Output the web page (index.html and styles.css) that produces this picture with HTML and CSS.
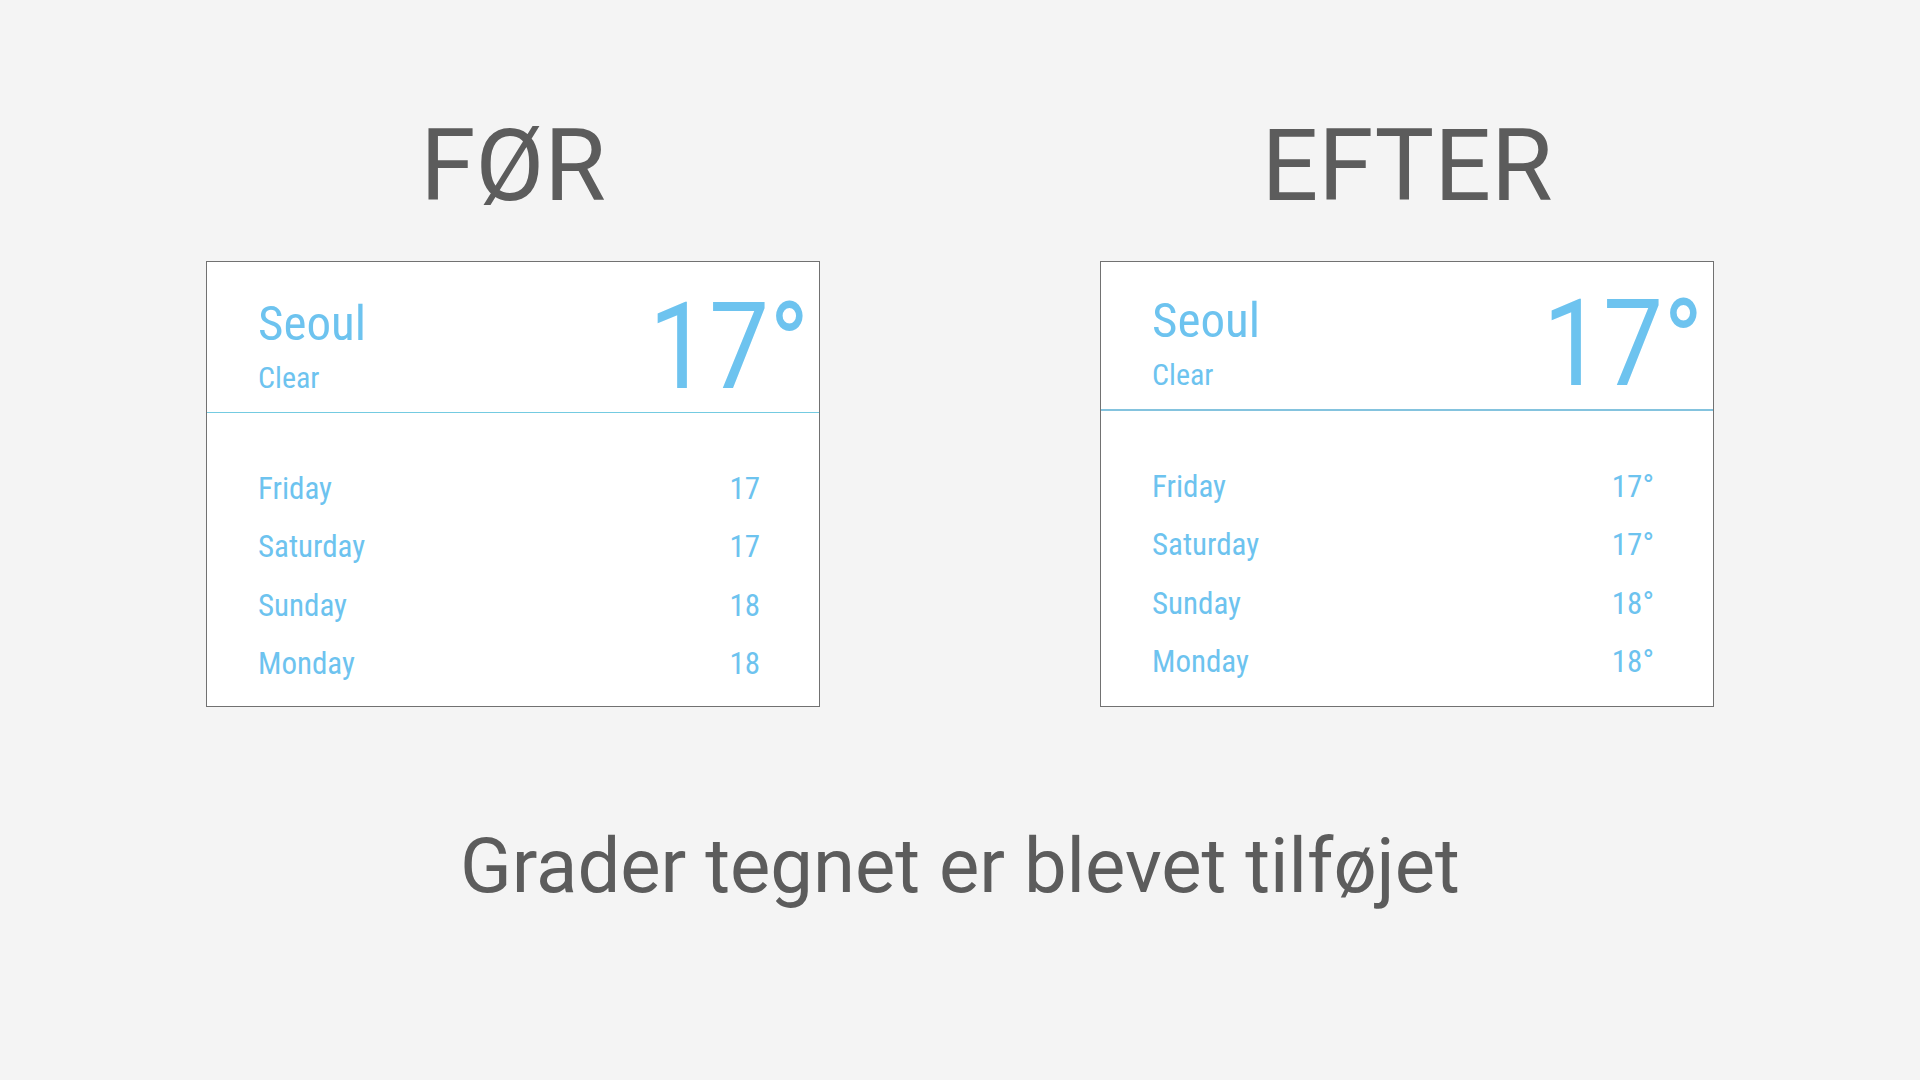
FILE: index.html
```html
<!DOCTYPE html>
<html lang="da">
<head>
<meta charset="utf-8">
<title>Før og efter</title>
<link rel="stylesheet" href="styles.css">
</head>
<body>
<main class="page">
  <section class="compare">
    <div class="panel">
      <h1 class="panel-title">FØR</h1>
      <div class="card card--before">
        <div class="card-head">
          <div class="place">
            <div class="city">Seoul</div>
            <div class="cond">Clear</div>
          </div>
          <div class="now"><span class="now-value">17°</span></div>
        </div>
        <ul class="forecast">
          <li class="day"><span class="day-name">Friday</span><span class="day-temp">17</span></li>
          <li class="day"><span class="day-name">Saturday</span><span class="day-temp">17</span></li>
          <li class="day"><span class="day-name">Sunday</span><span class="day-temp">18</span></li>
          <li class="day"><span class="day-name">Monday</span><span class="day-temp">18</span></li>
        </ul>
      </div>
    </div>
    <div class="panel">
      <h1 class="panel-title">EFTER</h1>
      <div class="card card--after">
        <div class="card-head">
          <div class="place">
            <div class="city">Seoul</div>
            <div class="cond">Clear</div>
          </div>
          <div class="now"><span class="now-value">17°</span></div>
        </div>
        <ul class="forecast">
          <li class="day"><span class="day-name">Friday</span><span class="day-temp">17°</span></li>
          <li class="day"><span class="day-name">Saturday</span><span class="day-temp">17°</span></li>
          <li class="day"><span class="day-name">Sunday</span><span class="day-temp">18°</span></li>
          <li class="day"><span class="day-name">Monday</span><span class="day-temp">18°</span></li>
        </ul>
      </div>
    </div>
  </section>
  <p class="caption">Grader tegnet er blevet tilføjet</p>
</main>
</body>
</html>
```
FILE: styles.css
```css
html, body {
  margin: 0;
  padding: 0;
}

body {
  background: #f4f4f4;
  font-family: Roboto, "Noto Sans", sans-serif;
  color: #5c5c5c;
}

.page {
  width: 1920px;
  height: 1080px;
  box-sizing: border-box;
  padding-top: 116px;
  display: flex;
  flex-direction: column;
  align-items: center;
}

.compare {
  display: flex;
  gap: 280px;
}

.panel {
  display: flex;
  flex-direction: column;
  align-items: center;
}

.panel-title {
  margin: 0 0 45px;
  font-size: 100px;
  line-height: 100px;
  font-weight: 400;
  color: #5c5c5c;
}

.card {
  width: 614px;
  height: 446px;
  box-sizing: border-box;
  background: #ffffff;
  border: 1px solid #717171;
  color: #6dc3ef;
  font-family: "Roboto Condensed", Roboto, sans-serif;
  font-stretch: condensed;
}

.card-head {
  display: flex;
  justify-content: space-between;
  align-items: flex-end;
  padding: 31px 10px 17px 51px;
  border-bottom: 2px solid #84c3de;
}

.card--before .card-head {
  padding-top: 34px;
  padding-bottom: 17px;
  border-bottom: 1px solid #74cbe1;
}

.city {
  font-size: 49px;
  line-height: 56px;
}

.cond {
  margin-top: 9px;
  font-size: 30px;
  line-height: 34px;
}

.now {
  font-family: Roboto, sans-serif;
  font-stretch: normal;
  font-size: 121px;
  line-height: 96.3px;
}

.now-value {
  display: inline-block;
  transform: scaleX(0.885);
  transform-origin: right center;
}

.forecast {
  list-style: none;
  margin: 0;
  padding: 47px 59px 0 51px;
}

.day {
  display: flex;
  justify-content: space-between;
  font-size: 31px;
  line-height: 58.3px;
}

.caption {
  margin: 121px 0 0;
  font-size: 76px;
  line-height: 76px;
  color: #5c5c5c;
}
```
